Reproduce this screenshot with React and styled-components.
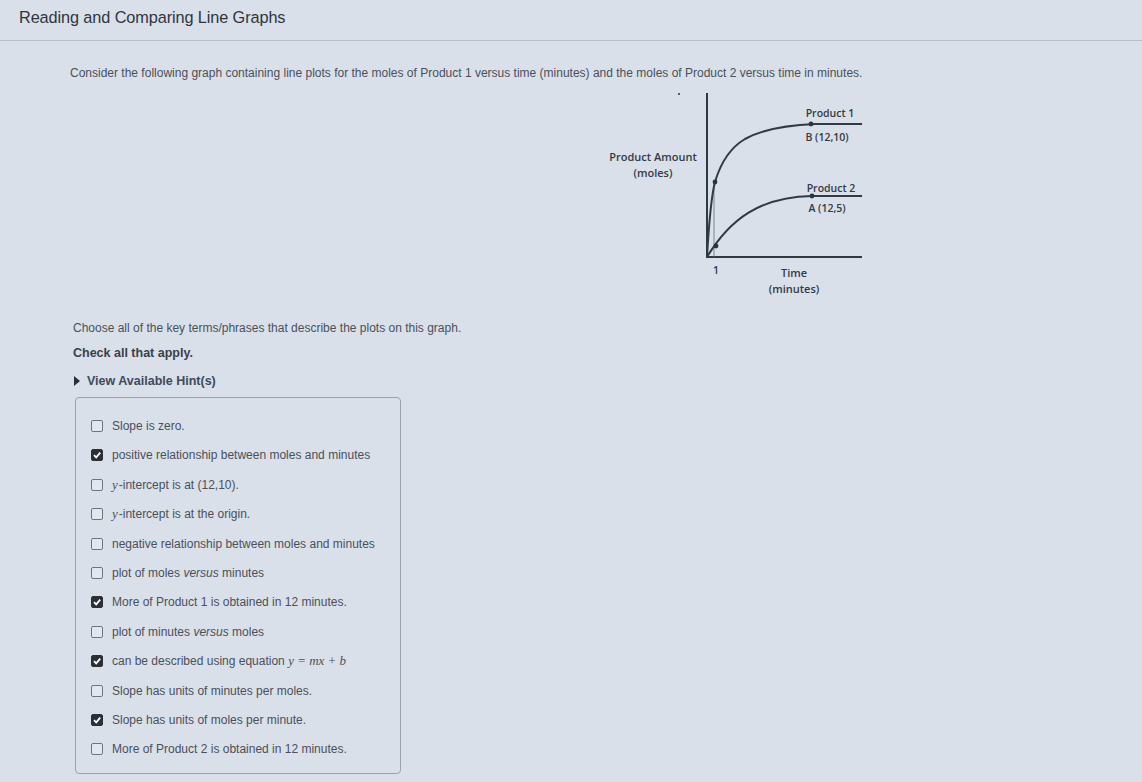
import styled, { createGlobalStyle } from "styled-components";

const GlobalStyle = createGlobalStyle`
  html, body {
    margin: 0;
    padding: 0;
    background: #d9e0e9;
  }
  body {
    font-family: "Liberation Sans", Arial, sans-serif;
    color: #3b4049;
  }
`;

const options = [
  { text: "Slope is zero.", checked: false },
  { text: "positive relationship between moles and minutes", checked: true },
  { text: "-intercept is at (12,10).", y: true, checked: false },
  { text: "-intercept is at the origin.", y: true, checked: false },
  { text: "negative relationship between moles and minutes", checked: false },
  { text: "versus", plot: ["plot of moles ", " minutes"], checked: false },
  { text: "More of Product 1 is obtained in 12 minutes.", checked: true },
  { text: "versus", plot: ["plot of minutes ", " moles"], checked: false },
  { text: "can be described using equation ", eq: true, checked: true },
  { text: "Slope has units of minutes per moles.", checked: false },
  { text: "Slope has units of moles per minute.", checked: true },
  { text: "More of Product 2 is obtained in 12 minutes.", checked: false },
];

const Graph = () => (
  <svg width="270" height="215" viewBox="0 0 270 215">
    <g
      fontFamily="'Open Sans', sans-serif"
      fontSize="11"
      fontWeight="600"
      fill="#333a44"
      textAnchor="middle"
    >
      <text x="53" y="74">Product Amount</text>
      <text x="53" y="90">(moles)</text>
      <text x="230" y="30" fontSize="10.5">Product 1</text>
      <text x="227" y="54" fontSize="10.5">B (12,10)</text>
      <text x="231" y="105" fontSize="10.5">Product 2</text>
      <text x="227" y="125" fontSize="10.5">A (12,5)</text>
      <text x="116" y="187" fontSize="10.5">1</text>
      <text x="194" y="190">Time</text>
      <text x="194" y="206">(minutes)</text>
    </g>
    <circle cx="79" cy="7" r="1" fill="#333" />
    <line x1="107" y1="6" x2="107" y2="171" stroke="#2f3a40" strokeWidth="2" />
    <line x1="106" y1="170" x2="262" y2="170" stroke="#2f3a40" strokeWidth="2" />
    <line x1="114" y1="95" x2="114" y2="170" stroke="#66707a" strokeWidth="0.8" />
    <path
      d="M107,170 C109,135 111,110 115,95 C120,78 128,62 145,52 C165,41 190,38 215,37 L262,37"
      fill="none"
      stroke="#2f3a45"
      strokeWidth="2"
    />
    <path
      d="M107,170 C130,132 160,110 212,109 L262,109"
      fill="none"
      stroke="#2f3a45"
      strokeWidth="2"
    />
    <circle cx="115" cy="95" r="2.4" fill="#2b333c" />
    <circle cx="116" cy="159" r="2.4" fill="#2b333c" />
    <circle cx="211" cy="37" r="2.4" fill="#2b333c" />
    <circle cx="212" cy="109" r="2.4" fill="#2b333c" />
  </svg>
);

const Check = ({ checked }) => (
  <Box $checked={checked}>
    {checked && (
      <svg width="10" height="10" viewBox="0 0 10 10">
        <path d="M2,5.2 L4.2,7.4 L8.2,2.6" fill="none" stroke="#fff" strokeWidth="1.8" />
      </svg>
    )}
  </Box>
);

export default function App() {
  return (
    <Page>
      <GlobalStyle />
      <Header>
        <Title>Reading and Comparing Line Graphs</Title>
      </Header>
      <Content>
        <Prompt>
          Consider the following graph containing line plots for the moles of Product 1 versus time
          (minutes) and the moles of Product 2 versus time in minutes.
        </Prompt>
        <Figure>
          <Graph />
        </Figure>
        <Question>
          <Instruction>Choose all of the key terms/phrases that describe the plots on this graph.</Instruction>
          <Apply>Check all that apply.</Apply>
          <Hint>
            <Arrow />
            View Available Hint(s)
          </Hint>
          <Choices>
            {options.map((o, i) => (
              <Choice key={i}>
                <Check checked={o.checked} />
                <Label>
                  {o.y && <Math>y</Math>}
                  {o.plot ? (
                    <>
                      {o.plot[0]}
                      <em>versus</em>
                      {o.plot[1]}
                    </>
                  ) : (
                    o.text
                  )}
                  {o.eq && <Math>y = mx + b</Math>}
                </Label>
              </Choice>
            ))}
          </Choices>
        </Question>
      </Content>
    </Page>
  );
}

const Page = styled.div`
  min-height: 782px;
`;

const Header = styled.header`
  height: 41px;
  padding-left: 19px;
  display: flex;
  align-items: center;
  border-bottom: 1px solid #b6bec8;
  box-sizing: border-box;
  margin-bottom: 1px;
`;

const Title = styled.h1`
  margin: 0 0 6px;
  font-size: 16.3px;
  font-weight: 400;
  color: #30353d;
  letter-spacing: -0.1px;
`;

const Content = styled.main`
  padding-left: 70px;
`;

const Prompt = styled.p`
  margin: 25px 0 0;
  font-size: 12px;
  line-height: 14px;
  color: #4a505a;
`;

const Figure = styled.div`
  margin: 7px 0 0 530px;
  height: 215px;
`;

const Question = styled.section`
  padding-left: 3px;
  margin-top: 19px;
`;

const Instruction = styled.p`
  margin: 0;
  font-size: 12px;
  line-height: 14px;
  color: #4a505a;
`;

const Apply = styled.p`
  margin: 11px 0 0;
  font-size: 12.5px;
  line-height: 14px;
  font-weight: 700;
  color: #3b4049;
`;

const Hint = styled.div`
  margin-top: 14px;
  display: flex;
  align-items: center;
  gap: 7px;
  font-size: 12.5px;
  font-weight: 700;
  color: #3e4a5c;
`;

const Arrow = styled.span`
  width: 0;
  height: 0;
  margin-left: 1px;
  border-top: 5px solid transparent;
  border-bottom: 5px solid transparent;
  border-left: 6px solid #2a3038;
`;

const Choices = styled.div`
  margin: 9px 0 0 2px;
  width: 326px;
  box-sizing: border-box;
  border: 1px solid #9aa3ad;
  border-radius: 4px;
  padding: 21px 0 17px 15px;
  display: flex;
  flex-direction: column;
  gap: 15.4px;
`;

const Choice = styled.div`
  display: flex;
  align-items: center;
  gap: 9px;
  height: 14px;
`;

const Box = styled.span`
  width: 12px;
  height: 12px;
  box-sizing: border-box;
  border-radius: 2px;
  border: 1.5px solid ${(p) => (p.$checked ? "#2c3036" : "#6d7680")};
  background: ${(p) => (p.$checked ? "#2c3036" : "#e2e7ee")};
  display: flex;
  align-items: center;
  justify-content: center;
  flex-shrink: 0;
`;

const Label = styled.span`
  font-size: 12px;
  color: #4a505a;
  white-space: nowrap;

  em {
    font-style: italic;
  }
`;

const Math = styled.span`
  font-family: "Liberation Serif", "Times New Roman", serif;
  font-style: italic;
  font-size: 13px;
  margin-right: 1px;
`;
